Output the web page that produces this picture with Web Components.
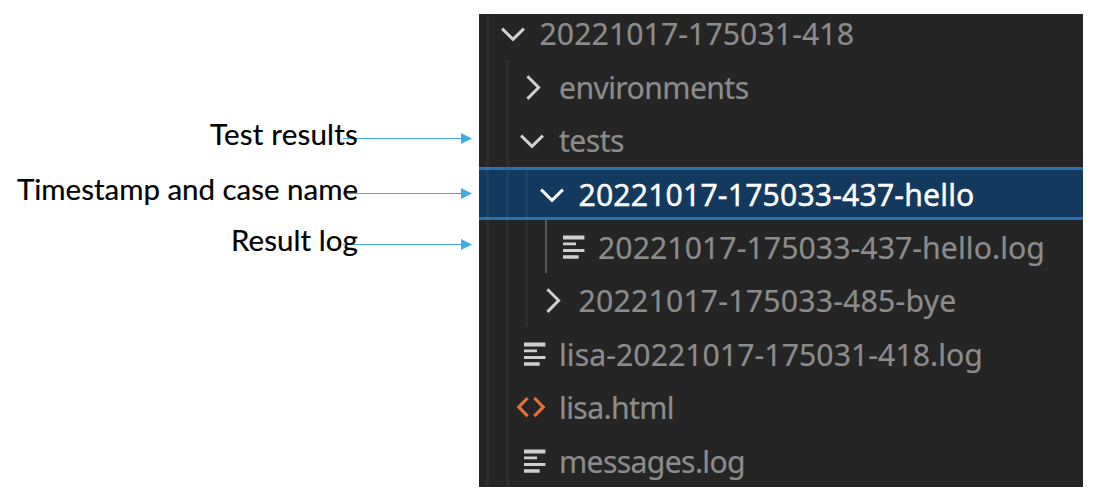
<!DOCTYPE html>
<html lang="en">
<head>
<meta charset="utf-8">
<title>Log folder structure</title>
<style>
  body { margin: 0; background: #fff; }
</style>
</head>
<body>
<log-guide></log-guide>
<script>
// Spreads letters evenly so the label takes the width given in its attribute.
function fitLabel(el, width) {
  if (!width) return;
  el.style.letterSpacing = '0';
  const natural = el.getBoundingClientRect().width;
  el.style.letterSpacing = ((width - natural) / el.textContent.length) + 'px';
}

const ICONS = {
  down: '<path d="M11.1 22.6 L22 33.4 L32.9 22.6" fill="none" stroke="currentColor" stroke-width="3"/>',
  right: '<path d="M17.4 16.3 L28.6 27.5 L17.4 38.9" fill="none" stroke="currentColor" stroke-width="3"/>',
  log: '<path fill="currentColor" d="M14 15.6h21.4v3.8H14zM14 22.6h13v2.6H14zM14 29.1h21.4v2.8H14zM14 35.2h15.7v3.6H14z"/>',
  html: '<path d="M17.6 18 L8.8 27 L17.6 36.2 M24.4 18 L33.2 27 L24.4 36.2" fill="none" stroke="#e8703a" stroke-width="3.2"/>'
};

class TreeRow extends HTMLElement {
  connectedCallback() {
    const level = +this.getAttribute('level');
    const root = this.attachShadow({ mode: 'open' });
    let guides = '';
    for (let i = 0; i <= level; i++) guides += `<i class="${i === 3 ? 'active' : ''}"></i>`;
    root.innerHTML = `
      <style>
        :host { display: flex; flex: none; height: 53.4px; box-sizing: border-box; color: #8c8c8c; }
        :host([selected]) { color: #fff; background: #133a5e; box-shadow: inset 0 3px #2a70b4, inset 0 -3px #2a70b4; }
        i { flex: none; width: 3px; margin: 0 1.5px 0 15px; background: #2d2d2e; }
        i:first-of-type { margin-left: 7px; }
        i.active { width: 2.4px; margin-right: 2.1px; background: #585858; }
        :host([selected]) i { background: #1c4265; margin-top: 3px; margin-bottom: 3px; }
        svg { flex: none; width: 48px; height: 53.4px; color: #cfcfcf; }
        :host([selected]) svg { color: #fff; }
        .label { flex: none; align-self: flex-start; white-space: pre; font: 30.2px/53.4px "Noto Sans", sans-serif; padding: 1px 0 0 1px; -webkit-text-stroke: .2px currentColor; }
        :host([selected]) .label { -webkit-text-stroke-width: .4px; }
      </style>
      ${guides}
      <svg viewBox="0 0 48 53.4" aria-hidden="true">${ICONS[this.getAttribute('icon')]}</svg>
      <span class="label">${this.getAttribute('label')}</span>`;
    fitLabel(root.querySelector('.label'), +this.getAttribute('fit'));
  }
}

class FileTree extends HTMLElement {
  connectedCallback() {
    this.attachShadow({ mode: 'open' }).innerHTML = `
      <style>
        :host { display: flex; flex-direction: column; justify-content: flex-end; overflow: hidden; background: #252526; }
      </style>
      <slot></slot>`;
  }
}

class ArrowNote extends HTMLElement {
  connectedCallback() {
    const root = this.attachShadow({ mode: 'open' });
    root.innerHTML = `
      <style>
        :host { display: flex; align-items: center; justify-content: flex-end; height: 55px; }
        :host([compact]) { height: 47px; }
        .text { position: relative; z-index: 1; white-space: pre; color: #000; font: 29.5px/40px Lato, "Gill Sans", sans-serif; margin-top: -10px; -webkit-text-stroke: .2px #000; }
        svg { flex: none; width: 129px; height: 11px; margin-left: -15px; margin-right: 7px; }
      </style>
      <span class="text">${this.getAttribute('label')}</span>
      <svg viewBox="0 0 129 11" aria-hidden="true"><path d="M0 5h119v1H0zM118 0l11 5.5L118 11z" fill="#41abe5"/></svg>`;
    fitLabel(root.querySelector('.text'), +this.getAttribute('fit'));
  }
}

class LogGuide extends HTMLElement {
  connectedCallback() {
    this.attachShadow({ mode: 'open' }).innerHTML = `
      <style>
        :host { display: grid; grid-template-columns: 479px 604px; width: 1096px; height: 499px; background: #fff; overflow: hidden; }
        .notes { padding-top: 111px; }
        file-tree { margin-top: 14px; height: 473px; }
      </style>
      <div class="notes">
        <arrow-note label="Test results" fit="148"></arrow-note>
        <arrow-note label="Timestamp and case name" fit="341"></arrow-note>
        <arrow-note compact label="Result log" fit="127"></arrow-note>
      </div>
      <file-tree>
        <tree-row level="0" icon="down" label="20221017-175031-418" fit="315.5"></tree-row>
        <tree-row level="1" icon="right" label="environments" fit="190.5"></tree-row>
        <tree-row level="1" icon="down" label="tests" fit="66"></tree-row>
        <tree-row level="2" icon="down" selected label="20221017-175033-437-hello" fit="397"></tree-row>
        <tree-row level="3" icon="log" label="20221017-175033-437-hello.log" fit="448"></tree-row>
        <tree-row level="2" icon="right" label="20221017-175033-485-bye" fit="379"></tree-row>
        <tree-row level="1" icon="log" label="lisa-20221017-175031-418.log" fit="425"></tree-row>
        <tree-row level="1" icon="html" label="lisa.html" fit="116"></tree-row>
        <tree-row level="1" icon="log" label="messages.log" fit="187"></tree-row>
      </file-tree>`;
  }
}

customElements.define('tree-row', TreeRow);
customElements.define('file-tree', FileTree);
customElements.define('arrow-note', ArrowNote);
customElements.define('log-guide', LogGuide);
</script>
</body>
</html>
